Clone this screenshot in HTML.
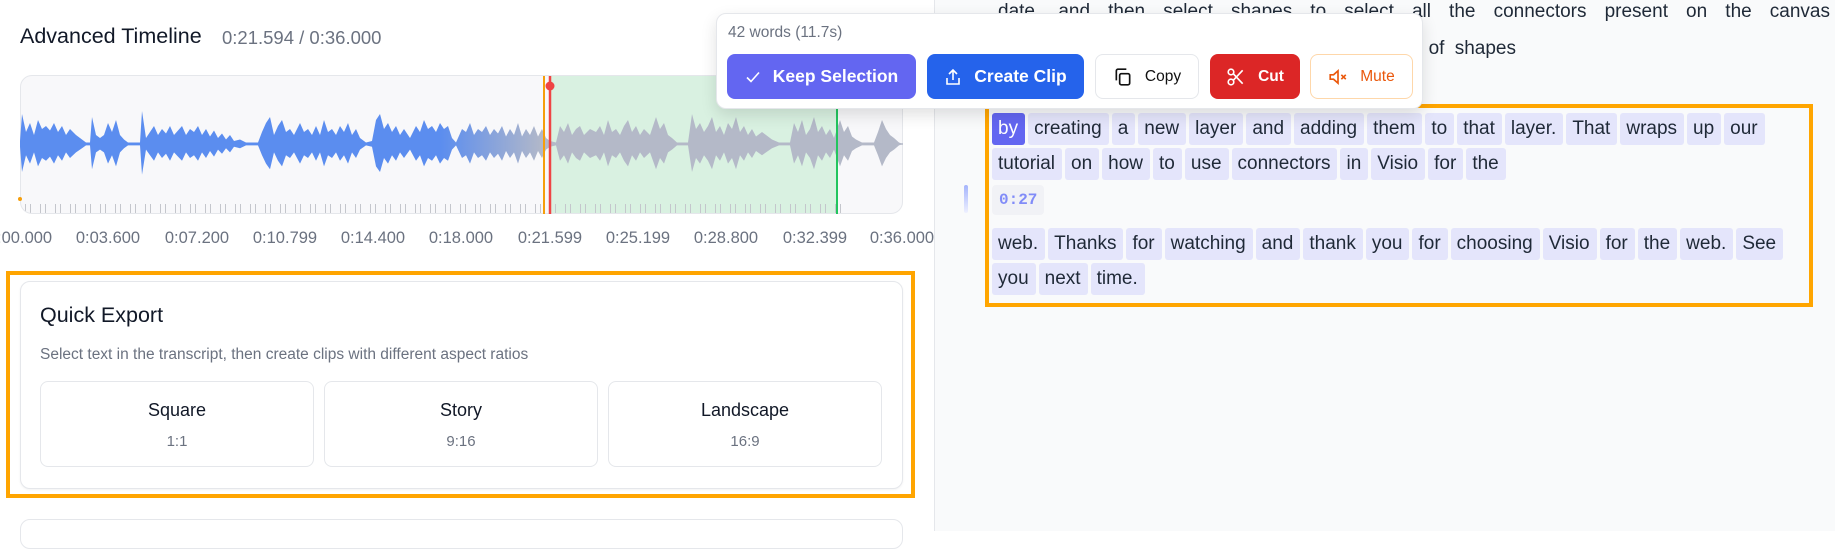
<!DOCTYPE html>
<html><head><meta charset="utf-8"><style>
*{margin:0;padding:0;box-sizing:border-box}
body{width:1835px;height:531px;overflow:hidden;background:#fff;font-family:"Liberation Sans",sans-serif;position:relative;color:#111827}
.a{position:absolute}
.lbl{position:absolute;top:229px;font-size:16.5px;color:#6b7280;width:100px;text-align:center;margin-left:-50px}
.btn{position:absolute;top:54px;height:45px;border-radius:8px;display:flex;align-items:center;justify-content:center;gap:12px;font-size:17.5px;font-weight:600}
.ex{position:absolute;top:381px;height:86px;width:274px;border:1px solid #e5e7eb;border-radius:8px;text-align:center}
.ex b{display:block;margin-top:18px;font-size:18px;font-weight:500;color:#111827}
.ex i{display:block;margin-top:12px;font-style:normal;font-size:15px;color:#6b7280}
.ln{position:absolute;left:992px;white-space:nowrap;font-size:19px;color:#1f2937}
.ln span{display:inline-block;height:32px;line-height:32px;padding:0 7px 0 6px;margin-right:3px;background:#e4e5fb;border-radius:3px}
</style></head><body>
<div class="a" style="left:934px;top:0;width:901px;height:531px;background:#f9fafb;border-left:1px solid #e5e7eb"></div>
<div class="a" style="left:998px;top:1px;width:832px;font-size:19px;color:#1f2937;text-align:justify;text-align-last:justify;line-height:22px">date, and then select shapes to select all the connectors present on the canvas</div>
<div class="a" style="left:1412px;top:38px;font-size:19px;color:#1f2937;word-spacing:5px">r of shapes</div>

<div class="a" style="left:20px;top:24px;font-size:21.5px;font-weight:500">Advanced Timeline</div>
<div class="a" style="left:222px;top:27px;font-size:18.5px;color:#6b7280">0:21.594 / 0:36.000</div>

<div class="a" style="left:20px;top:75px;width:883px;height:139px;border:1px solid #e5e7eb;border-radius:12px;background:#f8f8fa;overflow:hidden">
<div class="a" style="left:530px;top:0;width:287px;height:139px;background:#d9f1e1"></div>
<div class="a" style="left:4px;top:128px;width:820px;height:10px;background:repeating-linear-gradient(90deg,#c4c6cc 0 1px,transparent 1px 5px,#c4c6cc 5px 6px,transparent 6px 9px,transparent 9px 15px)"></div>
</div>
<svg class="a" style="left:0;top:0" width="934" height="220">
<defs><linearGradient id="g" gradientUnits="userSpaceOnUse" x1="440" x2="545" y1="0" y2="0"><stop offset="0" stop-color="#5b8def"/><stop offset="1" stop-color="#b4b9c8"/></linearGradient>
<path id="w" d="M20,0 L20,2 L22,20 L26,8 L30,14 L34,6 L38,16 L42,10 L46,12 L50,9 L54,14 L58,8 L62,12 L66,6 L70,10 L76,6 L82,3 L86,1 L90,1 L92,18 L96,6 L100,4 L104,6 L108,14 L112,8 L116,16 L120,6 L124,3 L128,1 L140,1 L142,22 L146,4 L150,8 L154,12 L158,6 L162,10 L166,7 L170,12 L174,6 L178,9 L182,12 L186,6 L190,10 L194,8 L198,12 L202,6 L206,10 L210,5 L214,9 L218,4 L222,7 L226,3 L230,6 L234,2 L240,3 L246,1 L258,1 L262,8 L266,14 L270,18 L274,6 L278,12 L282,16 L286,8 L290,10 L294,6 L300,14 L304,8 L308,10 L312,6 L316,12 L320,6 L324,16 L328,8 L332,10 L336,6 L340,12 L344,8 L348,14 L352,6 L356,10 L360,4 L366,1 L372,2 L376,16 L380,20 L384,10 L388,14 L392,8 L396,12 L400,6 L404,10 L410,4 L416,12 L420,8 L424,16 L428,10 L432,12 L436,8 L440,14 L444,10 L448,12 L452,4 L456,1 L462,10 L466,8 L470,14 L474,6 L478,10 L482,8 L486,12 L490,6 L494,10 L498,7 L502,12 L506,5 L510,10 L514,6 L518,14 L522,5 L526,10 L530,6 L534,12 L538,5 L542,10 L546,4 L550,2 L556,1 L560,12 L564,8 L568,14 L572,6 L576,10 L580,12 L584,6 L590,10 L596,8 L600,12 L604,6 L608,16 L612,8 L616,10 L620,6 L624,12 L628,16 L632,8 L636,12 L640,6 L644,10 L650,6 L656,18 L660,10 L664,14 L668,6 L672,4 L677,1 L688,1 L692,20 L696,10 L700,14 L704,8 L708,12 L712,18 L716,8 L720,12 L724,6 L728,14 L732,10 L736,18 L740,8 L744,12 L748,6 L752,10 L756,5 L762,8 L766,6 L772,3 L779,1 L790,1 L794,14 L798,8 L802,16 L806,6 L810,10 L814,18 L818,8 L822,12 L826,6 L830,10 L834,4 L840,16 L844,8 L848,12 L852,5 L856,3 L862,1 L874,1 L878,8 L882,16 L886,10 L890,6 L894,4 L899,1 L903,0 Z"/></defs>
<g transform="translate(0,144) scale(1,-1.5)" fill="url(#g)"><use href="#w"/></g>
<g transform="translate(0,144) scale(1,1.4)" fill="url(#g)"><use href="#w"/></g>
<line x1="20" y1="144" x2="903" y2="144" stroke="url(#g)" stroke-width="1.5"/>
<line x1="544" y1="76" x2="544" y2="214" stroke="#f59e0b" stroke-width="2"/>
<line x1="550" y1="76" x2="550" y2="214" stroke="#ef4444" stroke-width="2.5"/>
<circle cx="550" cy="86" r="4.5" fill="#ef4444"/>
<line x1="837" y1="76" x2="837" y2="214" stroke="#22c55e" stroke-width="2"/>
<circle cx="20" cy="199" r="2" fill="#f59e0b"/>
</svg>
<div class="lbl" style="left:20px">0:00.000</div><div class="lbl" style="left:108px">0:03.600</div><div class="lbl" style="left:197px">0:07.200</div><div class="lbl" style="left:285px">0:10.799</div><div class="lbl" style="left:373px">0:14.400</div><div class="lbl" style="left:461px">0:18.000</div><div class="lbl" style="left:550px">0:21.599</div><div class="lbl" style="left:638px">0:25.199</div><div class="lbl" style="left:726px">0:28.800</div><div class="lbl" style="left:815px">0:32.399</div><div class="lbl" style="left:902px">0:36.000</div>

<div class="a" style="left:6px;top:271px;width:909px;height:227px;border:4px solid #ffa500"></div>
<div class="a" style="left:20px;top:281px;width:883px;height:208px;border:1px solid #e5e7eb;border-radius:10px;background:#fff;box-shadow:0 1px 2px rgba(0,0,0,.05)"></div>
<div class="a" style="left:40px;top:303px;font-size:21.5px;font-weight:500">Quick Export</div>
<div class="a" style="left:40px;top:346px;font-size:15.5px;color:#6b7280">Select text in the transcript, then create clips with different aspect ratios</div>
<div class="ex" style="left:40px"><b>Square</b><i>1:1</i></div>
<div class="ex" style="left:324px"><b>Story</b><i>9:16</i></div>
<div class="ex" style="left:608px"><b>Landscape</b><i>16:9</i></div>
<div class="a" style="left:20px;top:519px;width:883px;height:30px;border:1px solid #e5e7eb;border-radius:10px"></div>

<div class="a" style="left:985px;top:104px;width:828px;height:203px;border:4px solid #ffa500"></div>
<div class="a" style="left:964px;top:185px;width:4px;height:28px;border-radius:2px;background:linear-gradient(#a5b4fc,#eef0ff)"></div>
<div class="ln" style="top:113px"><span style="background:#6366f1;color:#fff">by</span><span>creating</span><span>a</span><span>new</span><span>layer</span><span>and</span><span>adding</span><span>them</span><span>to</span><span>that</span><span>layer.</span><span>That</span><span>wraps</span><span>up</span><span>our</span></div>
<div class="ln" style="top:148px"><span>tutorial</span><span>on</span><span>how</span><span>to</span><span>use</span><span>connectors</span><span>in</span><span>Visio</span><span>for</span><span>the</span></div>
<div class="a" style="left:992px;top:185px;height:30px;line-height:30px;padding:0 7px;font-family:'Liberation Mono',monospace;font-size:16px;font-weight:bold;color:#818cf8;background:#f1f2f6;border-radius:4px">0:27</div>
<div class="ln" style="top:228px"><span>web.</span><span>Thanks</span><span>for</span><span>watching</span><span>and</span><span>thank</span><span>you</span><span>for</span><span>choosing</span><span>Visio</span><span>for</span><span>the</span><span>web.</span><span>See</span></div>
<div class="ln" style="top:263px"><span>you</span><span>next</span><span>time.</span></div>

<div class="a" style="left:716px;top:13px;width:707px;height:96px;background:#fff;border:1px solid #e5e7eb;border-radius:10px;box-shadow:0 6px 16px rgba(0,0,0,.12)"></div>
<div class="a" style="left:728px;top:24px;font-size:15.5px;color:#6b7280">42 words (11.7s)</div>
<div class="btn" style="left:727px;width:189px;background:#6366f1;color:#fff"><svg width="16" height="16" viewBox="0 0 16 16"><path d="M2 8.5l4 4 8-9" fill="none" stroke="#fff" stroke-width="1.6"/></svg>Keep Selection</div>
<div class="btn" style="left:927px;width:157px;background:#2563eb;color:#fff"><svg width="18" height="18" viewBox="0 0 18 18" fill="none" stroke="#fff" stroke-width="1.6"><path d="M9 12V2M5 6l4-4 4 4M3 10v6h12v-6"/></svg>Create Clip</div>
<div class="btn" style="left:1095px;width:104px;background:#fff;border:1px solid #e5e7eb;color:#111;font-size:15.5px;font-weight:500"><svg width="20" height="20" viewBox="0 0 18 18" fill="none" stroke="#111" stroke-width="1.5"><rect x="6" y="6" width="9" height="10" rx="1.5"/><path d="M3 12V3.5A1.5 1.5 0 0 1 4.5 2H12"/></svg>Copy</div>
<div class="btn" style="left:1210px;width:90px;background:#dc2626;color:#fff;font-size:15.5px"><svg width="20" height="20" viewBox="0 0 18 18" fill="none" stroke="#fff" stroke-width="1.5"><circle cx="4.5" cy="4.5" r="2.5"/><circle cx="4.5" cy="13.5" r="2.5"/><path d="M6.5 6L15 15M6.5 12L15 3"/></svg>Cut</div>
<div class="btn" style="left:1310px;width:103px;background:#fff;border:1px solid #fed7aa;color:#ea580c;font-size:15.5px;font-weight:500"><svg width="20" height="20" viewBox="0 0 18 18" fill="none" stroke="#ea580c" stroke-width="1.5"><path d="M2 7v4h3l4 3.5V3.5L5 7z"/><path d="M12 7l4 4M16 7l-4 4"/></svg>Mute</div>
</body></html>
